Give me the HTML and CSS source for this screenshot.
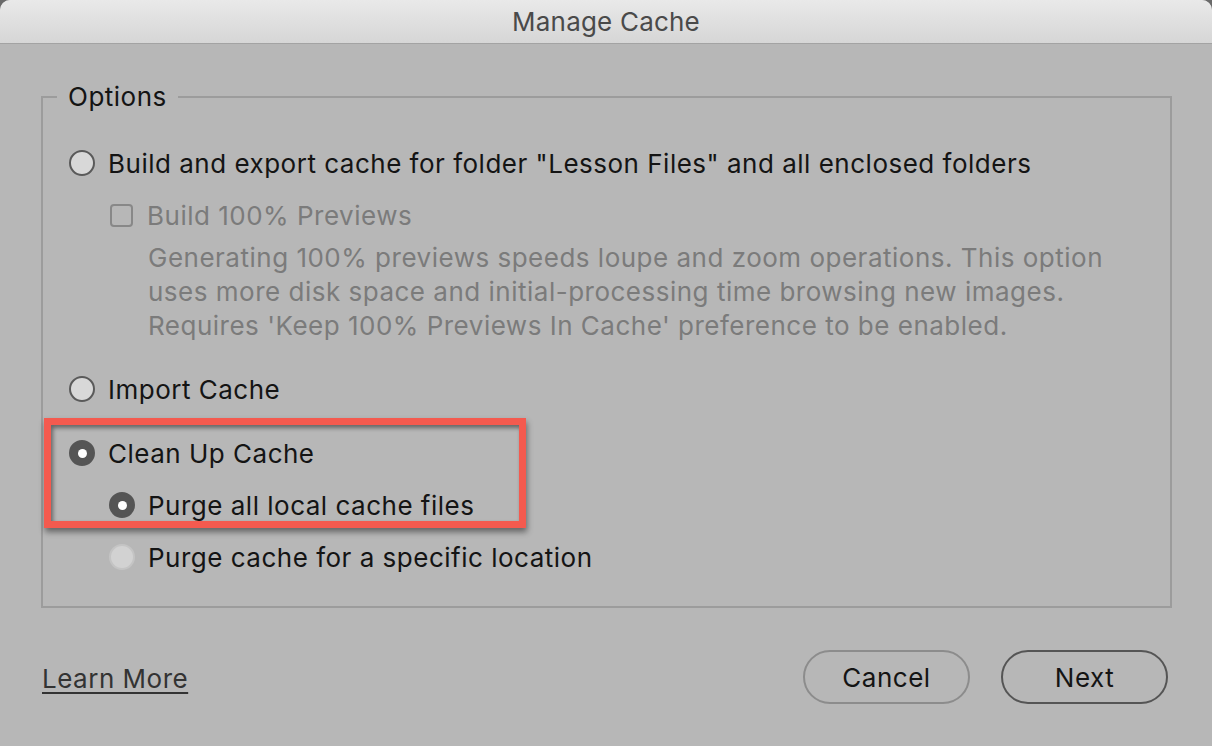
FILE: index.html
```html
<!DOCTYPE html>
<html>
<head>
<meta charset="utf-8">
<link rel="stylesheet" href="styles.css">
</head>
<body>
<div class="window">
  <div class="titlebar">Manage Cache</div>
  <div class="content">
    <fieldset class="options">
      <legend>Options</legend>
      <div class="row">
        <span class="radio"></span>
        <span class="label">Build and export cache for folder "Lesson Files" and all enclosed folders</span>
      </div>
      <div class="row sub disabled">
        <span class="checkbox"></span>
        <span class="label">Build 100% Previews</span>
      </div>
      <div class="desc">Generating 100% previews speeds loupe and zoom operations. This option<br>uses more disk space and initial-processing time browsing new images.<br>Requires 'Keep 100% Previews In Cache' preference to be enabled.</div>
      <div class="row gap-top">
        <span class="radio"></span>
        <span class="label">Import Cache</span>
      </div>
      <div class="row gap-top-sm">
        <span class="radio checked"></span>
        <span class="label">Clean Up Cache</span>
      </div>
      <div class="row sub">
        <span class="radio checked"></span>
        <span class="label">Purge all local cache files</span>
      </div>
      <div class="row sub">
        <span class="radio off"></span>
        <span class="label">Purge cache for a specific location</span>
      </div>
      <div class="highlight"></div>
    </fieldset>
    <div class="footer">
      <a class="learn">Learn More</a>
      <div class="buttons">
        <button class="btn cancel">Cancel</button>
        <button class="btn next">Next</button>
      </div>
    </div>
  </div>
</div>
</body>
</html>
```

FILE: styles.css
```css
* { box-sizing: border-box; }
html, body { margin: 0; padding: 0; }
body {
  background: #6a6a6a;
  font-family: Inter, "Liberation Sans", sans-serif;
  letter-spacing: 0.5px;
  width: 1212px;
  height: 746px;
  overflow: hidden;
}
.window {
  width: 1212px;
  height: 746px;
  background: #b7b7b7;
  border-radius: 10px 10px 0 0;
  overflow: hidden;
  display: flex;
  flex-direction: column;
}
.titlebar {
  height: 44px;
  flex: none;
  background: linear-gradient(#e9e9e9, #d6d6d6);
  border-bottom: 1px solid #a3a3a3;
  text-align: center;
  font-size: 26px;
  line-height: 43px;
  letter-spacing: 0.2px;
  color: #4a4a4a;
}
.content {
  flex: 1;
  padding: 38px 44px 0 41px;
  display: flex;
  flex-direction: column;
}
.options {
  position: relative;
  margin: 0;
  width: 1131px;
  height: 526px;
  border: 2px solid #9c9c9c;
  padding: 25px 0 0 26px;
  display: flex;
  flex-direction: column;
}
.options legend {
  margin-left: -12px;
  padding: 0 11px;
  font-size: 26px;
  line-height: 30px;
  color: #141414;
}
.row {
  height: 52px;
  display: flex;
  align-items: center;
  gap: 13px;
  font-size: 26px;
  color: #141414;
}
.row.sub { padding-left: 40px; }
.row.disabled { color: #7b7b7b; }
.gap-top { margin-top: 20px; }
.gap-top-sm { margin-top: 12px; }
.radio {
  width: 26px;
  height: 26px;
  border-radius: 50%;
  border: 2px solid #5a5a5a;
  background: #d8d8d8;
  flex: none;
  display: flex;
  align-items: center;
  justify-content: center;
}
.radio.checked {
  background: #555555;
  border-color: #555555;
}
.radio.checked::after {
  content: "";
  width: 9px;
  height: 9px;
  border-radius: 50%;
  background: #ffffff;
}
.radio.off {
  background: #d2d2d2;
  border-color: #c4c4c4;
}
.checkbox {
  width: 23px;
  height: 23px;
  border: 2px solid #888;
  border-radius: 4px;
  margin-left: 1px;
  margin-right: 1px;
  flex: none;
}
.desc {
  padding-left: 79px;
  font-size: 26px;
  line-height: 34px;
  color: #7b7b7b;
}
.highlight {
  position: absolute;
  left: 1px;
  top: 306px;
  width: 482px;
  height: 110px;
  border: 7px solid #f45a4f;
  box-shadow: inset 2px 3px 4px rgba(0,0,0,0.45), 1px 4px 6px rgba(0,0,0,0.45);
}
.footer {
  margin-top: 42px;
  display: flex;
  align-items: center;
  justify-content: space-between;
  height: 54px;
}
.learn {
  font-size: 26px;
  color: #333;
  text-decoration: underline;
  text-underline-offset: 4px;
  margin-left: 1px;
  margin-top: 2px;
}
.buttons {
  display: flex;
  gap: 31px;
}
.btn {
  width: 167px;
  height: 54px;
  border-radius: 27px;
  background: transparent;
  font-family: inherit;
  letter-spacing: 0.5px;
  font-size: 26px;
  color: #141414;
  padding: 0;
}
.btn.cancel { border: 2px solid #8c8c8c; }
.btn.next { border: 2px solid #555; }
```
